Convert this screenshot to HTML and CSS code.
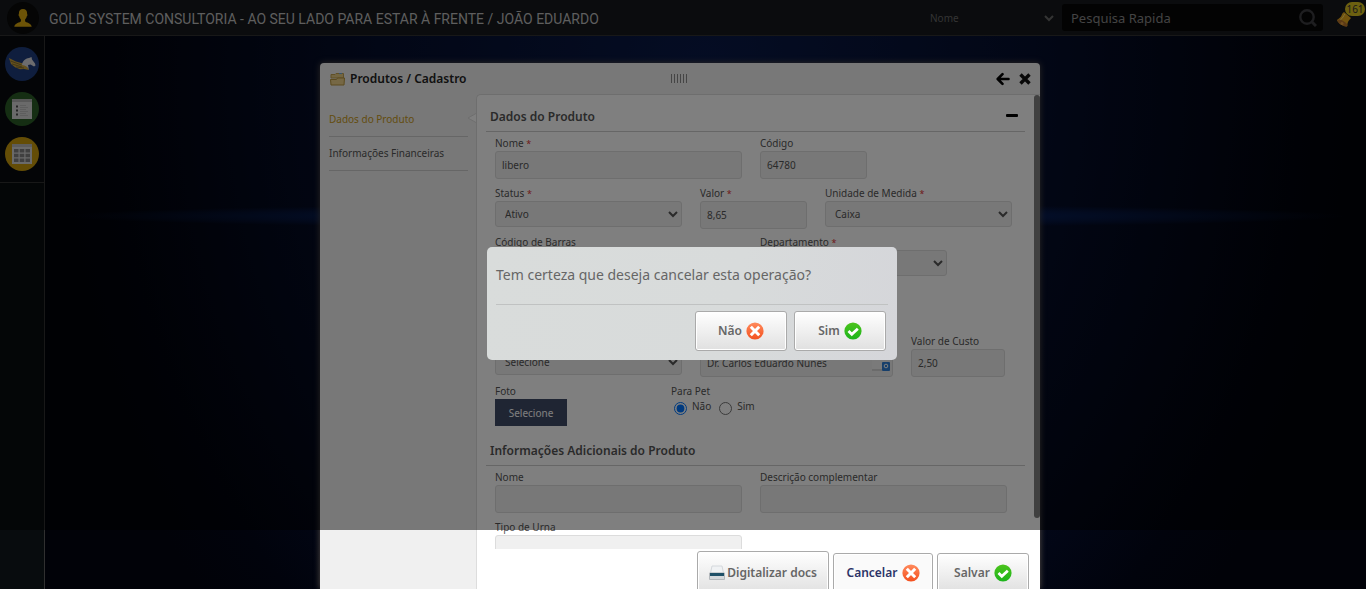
FILE: index.html
```
<!DOCTYPE html>
<html lang="pt-BR">
<head>
<meta charset="utf-8">
<title>Produtos / Cadastro</title>
<link rel="stylesheet" href="styles.css">
</head>
<body>
<svg class="defs" aria-hidden="true">
  <defs>
    <linearGradient id="g-red" x1="0" y1="0" x2="0" y2="1"><stop offset="0" stop-color="#ff8a5c"/><stop offset="1" stop-color="#f4501e"/></linearGradient>
    <linearGradient id="g-green" x1="0" y1="0" x2="0" y2="1"><stop offset="0" stop-color="#4cc41c"/><stop offset="1" stop-color="#1cb41c"/></linearGradient>
    <symbol id="i-no" viewBox="0 0 18 18"><circle cx="9" cy="9" r="8.6" fill="url(#g-red)"/><path d="M4.800 4.800l8.400 8.400M13.200 4.800l-8.400 8.400" stroke="#fff" stroke-width="3"/></symbol>
    <symbol id="i-yes" viewBox="0 0 18 18"><circle cx="9" cy="9" r="8.6" fill="url(#g-green)"/><path d="M4.500 9l3.300 3.300 6-5.600" fill="none" stroke="#fff" stroke-width="2.800"/></symbol>
  </defs>
</svg>
<header class="topbar">
  <span class="avatar"><svg width="18" height="18" viewBox="0 0 18 18" fill="#d8a60e"><path d="M9 0C6.300 0 4.700 1.800 4.900 4.700c0 .6-.5.7-.3 1.500.1.7.6.8.7 1.400.3 1.500.9 2.200 1.600 2.900v1.800c-.6 1.500-6.300 1.500-6.600 5.500h17.400c-.3-4-6-4-6.600-5.500v-1.800c.7-.7 1.300-1.400 1.600-2.900.1-.6.6-.7.7-1.400.2-.8-.3-.9-.3-1.500C13.300 1.800 11.700 0 9 0z"/></svg></span>
  <h1 class="company">GOLD SYSTEM CONSULTORIA - AO SEU LADO PARA ESTAR À FRENTE / JOÃO EDUARDO</h1>
  <select class="filter" aria-label="Filtro"><option>Nome</option></select>
  <form class="search">
    <input class="search-input" type="text" placeholder="Pesquisa Rapida" aria-label="Pesquisa Rapida">
    <button class="search-button" type="button" aria-label="Pesquisar"><svg width="18" height="18" viewBox="0 0 18 18" fill="none" stroke="#3c3c40" stroke-width="2.400"><circle cx="8" cy="8" r="6.700"/><path d="M13 13l4 4" stroke-width="3"/></svg></button>
  </form>
  <button class="alerts" type="button" aria-label="Alertas">
    <svg width="18" height="18" viewBox="0 0 18 18"><path d="M8 3C6 4 6 6 5 7.500S2 10 1 11c1 3 6 6.500 10 6.500.5-2 .5-4 1.500-5.500L15 9z" fill="#e6a81c"/><path d="M9 5c-2 2-1.500 4-5 6" stroke="#ffe270" fill="none"/><ellipse cx="6.500" cy="14" rx="5.800" ry="2.200" transform="rotate(32 6.500 14)" fill="#b8742c"/><circle cx="6" cy="14.500" r="1.500" fill="#e8a03c"/></svg>
    <span class="badge">161</span>
  </button>
</header>
<div class="workspace">
  <nav class="dock">
    <button class="dock-item blue" type="button" aria-label="Início"><svg width="28" height="14" viewBox="0 0 28 14"><path d="M1 1l7 3.500 7 2 3 1 3 5.500-5-1-4 .2-5-2L3 7z" fill="#c8a03a"/><path d="M2.500 4l11 4M4 7l10 3M8 10l8 1" stroke="#73632f" stroke-width=".8"/><path d="M14 8c.5-4 3-6.500 7-7l2.500-1 .5 2.500L27 6.500l.5 2L26 9.500 22.500 7.500 20 8l1 5c-1-3-3.500-4.500-7-5z" fill="#d8d8dc"/></svg></button>
    <button class="dock-item green" type="button" aria-label="Listas"><svg width="20" height="20" viewBox="0 0 20 20"><path fill="#d4d4d4" d="M0 0h20v20H0z"/><path fill="#b0b0b0" d="M0 0h20v3H0z"/><path stroke="#4a4a4a" stroke-width="2" d="M4 7.500h2M4 11.500h2M4 15.500h2"/><path stroke="#bcbcbc" d="M8 6.500h6M8 8.500h8M8 10.500h6M8 12.500h8M8 14.500h6M8 16.500h8"/></svg></button>
    <button class="dock-item gold" type="button" aria-label="Grade"><svg width="20" height="20" viewBox="0 0 20 20"><path fill="#d4d4d4" d="M0 0h20v20H0z"/><path fill="#b8b8b8" d="M0 0h20v3H0z"/><path fill="#808080" d="M2 5h4.500v3.500H2zM7.700 5h4.600v3.500H7.700zM13.500 5H18v3.500h-4.500zM2 9.800h4.500v3.400H2zM7.700 9.800h4.600v3.400H7.700zM13.500 9.800H18v3.400h-4.500zM2 14.500h4.500V18H2zM7.700 14.500h4.600V18H7.700zM13.500 14.500H18V18h-4.500z"/></svg></button>
  </nav>
  <main class="desktop">
    <section class="window">
      <header class="window-bar">
        <svg width="15" height="14" viewBox="0 0 15 14"><path d="M1 2.500h4l1-1h7.500V6H1z" fill="#e6cc84" stroke="#c0a050"/><path d="M9 1.500h3" stroke="#6fa6d8"/><path d="M.5 7.500h6l1-1.500h7l-.5 7H1z" fill="#ecd08a" stroke="#b8963e"/></svg>
        <h2 class="window-title">Produtos / Cadastro</h2>
        <span class="grip"></span>
        <span class="window-buttons">
          <button class="icon-button" type="button" aria-label="Voltar"><svg width="14" height="14" viewBox="0 0 14 14" fill="none" stroke="#000" stroke-width="2.600" stroke-linecap="round" stroke-linejoin="round"><path d="M12.500 7H2M6.500 2.200L1.700 7l4.800 4.800"/></svg></button>
          <button class="icon-button" type="button" aria-label="Fechar"><svg width="12" height="12" viewBox="0 0 12 12" stroke="#111" stroke-width="3.400"><path d="M1.500 1.500l9 9M10.500 1.500l-9 9"/></svg></button>
        </span>
      </header>
      <div class="window-body">
        <nav class="tabs">
          <a class="tab active" href="#dados">Dados do Produto<svg class="pointer" width="9" height="12" viewBox="0 0 9 12"><path d="M9 1.500L1 6l8 4.500" fill="#fff" stroke="#ddd"/></svg></a>
          <a class="tab" href="#financeiras">Informações Financeiras</a>
        </nav>
        <div class="panel">
          <form class="scroller" id="dados">
            <div class="section-head"><h3 class="section-title">Dados do Produto</h3><button class="collapse" type="button" aria-label="Recolher"></button></div>
            <div class="rows">
              <div class="row">
                <div class="field wide"><label for="nome">Nome <i>*</i></label><input id="nome" type="text" value="libero"></div>
                <div class="field narrow"><label for="codigo">Código</label><input id="codigo" type="text" value="64780"></div>
              </div>
              <div class="row compact">
                <div class="field medium"><label for="status">Status <i>*</i></label><select id="status"><option>Ativo</option></select></div>
                <div class="field narrow"><label for="valor">Valor <i>*</i></label><input id="valor" type="text" value="8,65"></div>
                <div class="field medium"><label for="unidade">Unidade de Medida <i>*</i></label><select id="unidade"><option>Caixa</option></select></div>
              </div>
              <div class="row">
                <div class="field wide"><label for="barras">Código de Barras</label><input id="barras" type="text"></div>
                <div class="field medium"><label for="depto">Departamento <i>*</i></label><select id="depto"><option></option></select></div>
              </div>
              <div class="row compact"></div>
              <div class="row">
                <div class="field medium"><span class="label-space"></span><select aria-label="Seleção"><option>Selecione</option></select></div>
                <div class="field lookup"><span class="label-space"></span><div class="lookup-box"><input type="text" value="Dr. Carlos Eduardo Nunes" aria-label="Responsável"><svg class="lookup-icon" width="18" height="14" viewBox="0 0 18 14"><path d="M0 0h12v12H0z" fill="#f4f4f4"/><path d="M0 12h10" stroke="#bbb"/><rect x="10" y="4" width="8" height="9" rx="1" fill="#2e7fd6"/><circle cx="14" cy="8" r="1.800" fill="none" stroke="#fff"/></svg></div></div>
                <div class="field cost"><label for="custo">Valor de Custo</label><input id="custo" type="text" value="2,50"></div>
              </div>
              <div class="row last">
                <div class="field photo"><span class="label">Foto</span><button class="pick" type="button">Selecione</button></div>
                <fieldset class="field pet"><legend>Para Pet</legend><div class="radios"><input type="radio" name="pet" id="pet-n" checked><label for="pet-n">Não</label><input type="radio" name="pet" id="pet-s"><label for="pet-s">Sim</label></div></fieldset>
              </div>
            </div>
            <div class="section-head"><h3 class="section-title">Informações Adicionais do Produto</h3></div>
            <div class="rows">
              <div class="row">
                <div class="field wide"><label for="nome2">Nome</label><input id="nome2" type="text"></div>
                <div class="field wide"><label for="descr">Descrição complementar</label><input id="descr" type="text"></div>
              </div>
              <div class="row">
                <div class="field wide"><label for="urna">Tipo de Urna</label><input id="urna" type="text"></div>
              </div>
            </div>
          </form>
          <div class="actions">
            <button class="btn tall" type="button"><svg width="16" height="16" viewBox="0 0 16 16"><path d="M3 1h10l1.500 7h-13z" fill="#f0f2f4" stroke="#d4d8dc"/><path d="M.5 8h15v6.500H.5z" fill="#d4d8dc" stroke="#b4b8bc"/><path d="M1 8h14v3H1z" fill="#1f5068"/></svg>Digitalizar docs</button>
            <button class="btn hover" type="button">Cancelar<svg width="18" height="18"><use href="#i-no"/></svg></button>
            <button class="btn" type="button">Salvar<svg width="18" height="18"><use href="#i-yes"/></svg></button>
          </div>
          <span class="scrollbar"></span>
        </div>
      </div>
    </section>
  </main>
</div>
<div class="overlay"></div>
<div class="dialog" role="dialog" aria-label="Confirmação">
  <p class="dialog-text">Tem certeza que deseja cancelar esta operação?</p>
  <div class="dialog-actions">
    <button class="btn" type="button">Não<svg width="18" height="18"><use href="#i-no"/></svg></button>
    <button class="btn" type="button">Sim<svg width="18" height="18"><use href="#i-yes"/></svg></button>
  </div>
</div>
</body>
</html>
```
FILE: styles.css
```
* { box-sizing: border-box; }
body {
  margin: 0;
  height: 100vh;
  overflow: hidden;
  display: flex;
  flex-direction: column;
  font: 10px/14px "Noto Sans", "Open Sans", sans-serif;
  color: #555;
  background: #000;
}
button, input, select { font: inherit; color: inherit; margin: 0; }
button { padding: 0; border: 0; background: none; }
h1, h2, h3, p { margin: 0; }
svg { display: block; flex: none; }
.defs { position: absolute; width: 0; height: 0; }

.topbar {
  flex: none;
  display: flex;
  align-items: center;
  height: 36px;
  padding-left: 7px;
  background: #16191c;
  border-bottom: 1px solid #303030;
}
.avatar {
  display: flex;
  align-items: center;
  justify-content: center;
  width: 32px;
  height: 32px;
  border-radius: 50%;
  background: #0a0a0a;
}
.company {
  flex: 1;
  margin-left: 10px;
  padding-top: 2px;
  font-family: Roboto, "Open Sans", sans-serif;
  font-size: 14px;
  line-height: 20px;
  font-weight: 400;
  color: #bcbcbc;
  white-space: nowrap;
}
.filter {
  width: 131px;
  height: 28px;
  padding: 0;
  border: 0;
  background: transparent;
  color: #686868;
}
.search {
  display: flex;
  align-items: center;
  width: 261px;
  height: 27px;
  margin-left: 5px;
  padding: 0 6px 0 9px;
  border-radius: 3px;
  background: #060606;
}
.search-input {
  flex: 1;
  min-width: 0;
  padding: 0;
  border: 0;
  background: none;
  font-size: 13px;
  line-height: 18px;
}
.search-input::placeholder { color: #888; }
.alerts { position: relative; width: 43px; height: 36px; padding: 0 0 0 13px; }
.badge {
  position: absolute;
  top: 2px;
  right: 1px;
  width: 20px;
  height: 14px;
  border-radius: 7px;
  background: #d8c020;
  color: #333;
  font-size: 10px;
  text-align: center;
}

.workspace { flex: 1; min-height: 0; display: flex; }
.dock {
  width: 45px;
  background: linear-gradient(#080b0e 0, #080b0e 146px, #303030 146px, #303030 147px, #080c0e 147px);
  border-right: 1px solid #303030;
  padding: 11px 5px;
  display: flex;
  flex-direction: column;
  gap: 11px;
}
.dock-item {
  display: flex;
  align-items: center;
  justify-content: center;
  width: 34px;
  height: 34px;
  border-radius: 50%;
}
.blue { background: #1e3c7c; }
.green { background: #2a5c26; }
.gold { background: #c89a0c; }

.desktop {
  position: relative;
  flex: 1;
  background:
    radial-gradient(ellipse 640px 12px at 50% 180px, #0a2c78, transparent),
    radial-gradient(ellipse 660px 800px at 50% 40px, #0a1a48, #050e2c 50%, #01030c 90%, #010208);
}
.window {
  position: absolute;
  top: 27px;
  bottom: 0;
  left: 275px;
  width: 720px;
  display: flex;
  flex-direction: column;
  border-radius: 4px 4px 0 0;
  background: #f0f0f0;
  box-shadow: 0 0 6px #57504a;
}
.window-bar {
  display: grid;
  grid-template-columns: 15px 316px 16px 1fr;
  align-items: center;
  column-gap: 5px;
  height: 31px;
  padding: 0 9px 0 10px;
}
.window-title { font-size: 12px; line-height: 16px; font-weight: 600; color: #222; }
.grip { height: 9px; background: repeating-linear-gradient(90deg, #8a8a8a 0 1px, transparent 1px 3px); }
.window-buttons { display: flex; align-items: center; justify-content: flex-end; gap: 9px; }
.window-body { flex: 1; min-height: 0; display: flex; }
.tabs { width: 156px; padding: 8px 8px 0 9px; }
.tab {
  position: relative;
  display: block;
  height: 34px;
  line-height: 33px;
  color: #555;
  text-decoration: none;
  border-bottom: 1px solid #ccc;
}
.tab.active { height: 35px; line-height: 35px; color: #c89a20; }
.pointer { position: absolute; top: 10px; right: -8px; }
.panel {
  position: relative;
  flex: 1;
  display: flex;
  flex-direction: column;
  padding: 0 15px 0 9px;
  background: #fff;
  border: solid #ddd;
  border-width: 1px 0 0 1px;
  border-radius: 5px 0 0 0;
}
.scrollbar {
  position: absolute;
  top: 0;
  right: 0;
  width: 6px;
  height: 423px;
  border-radius: 3px;
  background: #808080;
}
.scroller { flex: none; height: 454px; overflow: hidden; }
.section-head {
  display: flex;
  justify-content: space-between;
  align-items: center;
  height: 37px;
  padding: 8px 7px 0 4px;
  border-bottom: 1px solid #ccc;
}
.section-title { font-size: 12px; line-height: 16px; font-weight: 600; color: #555; }
.collapse { width: 12px; height: 3px; margin-bottom: 3px; border-radius: 1px; background: #000; }
.rows { padding: 4px 0 0 9px; }
.row { display: flex; gap: 18px; height: 50px; }
.compact { height: 49px; }
.last { height: 45px; }
.field { display: flex; flex-direction: column; flex: none; }
.field > label, .label, .label-space, legend { height: 15px; line-height: 14px; padding: 0; }
.field i { color: #d33; font-size: 9px; font-style: normal; }
.wide { width: 247px; }
.medium { width: 187px; }
.narrow { width: 107px; }
.lookup { width: 193px; }
.cost { width: 94px; }
.photo { width: 158px; align-items: flex-start; }
.field input[type="text"] {
  width: 100%;
  height: 28px;
  padding: 0 6px;
  border: 1px solid #dcdcdc;
  border-radius: 3px;
  background: #f0f0f0;
}
.field select {
  height: 26px;
  padding: 0 0 0 5px;
  border: 1px solid #dcdcdc;
  border-radius: 3px;
  background: #f0f0f0;
}
.lookup-box { position: relative; }
.lookup-icon { position: absolute; right: 3px; top: 9px; }
.pick { width: 72px; height: 27px; background: #3f4a66; color: #fff; }
.pet { margin: 0; padding: 0; border: 0; display: block; }
.radios { display: flex; gap: 5px; }
.radios input { width: 13px; height: 13px; margin: 3px 0 0 3px; }

.actions { display: flex; justify-content: flex-end; align-items: center; gap: 4px; padding: 2px 0; margin-right: -4px; }
.btn {
  display: flex;
  align-items: center;
  justify-content: center;
  gap: 4px;
  min-width: 92px;
  height: 40px;
  padding: 0 12px;
  border: 1px solid #aaa;
  border-radius: 3px;
  background: linear-gradient(#fff, #e0e0e0);
  box-shadow: inset 0 0 0 1px #fff;
  font-size: 12px;
  line-height: 16px;
  font-weight: 600;
  color: #666;
}
.btn.tall { height: 44px; gap: 2px; padding: 0 11px; }
.btn.hover { min-width: 100px; background: #fafafa; color: #2c3468; }

.overlay { position: fixed; top: 0; left: 0; right: 0; height: 90vh; background: rgba(0, 0, 0, .5); }
.dialog {
  position: fixed;
  top: 247px;
  left: 487px;
  width: 410px;
  padding: 0 9px 9px;
  border-radius: 5px;
  background: linear-gradient(100deg, #d9dcdb, #d8dbdb 60%, #d5d6da);
}
.dialog-text {
  height: 58px;
  font-size: 14px;
  line-height: 56px;
  color: #666;
  border-bottom: 1px solid #c0c2c2;
}
.dialog-actions { display: flex; justify-content: flex-end; gap: 7px; padding: 6px 2px 0; }
```
